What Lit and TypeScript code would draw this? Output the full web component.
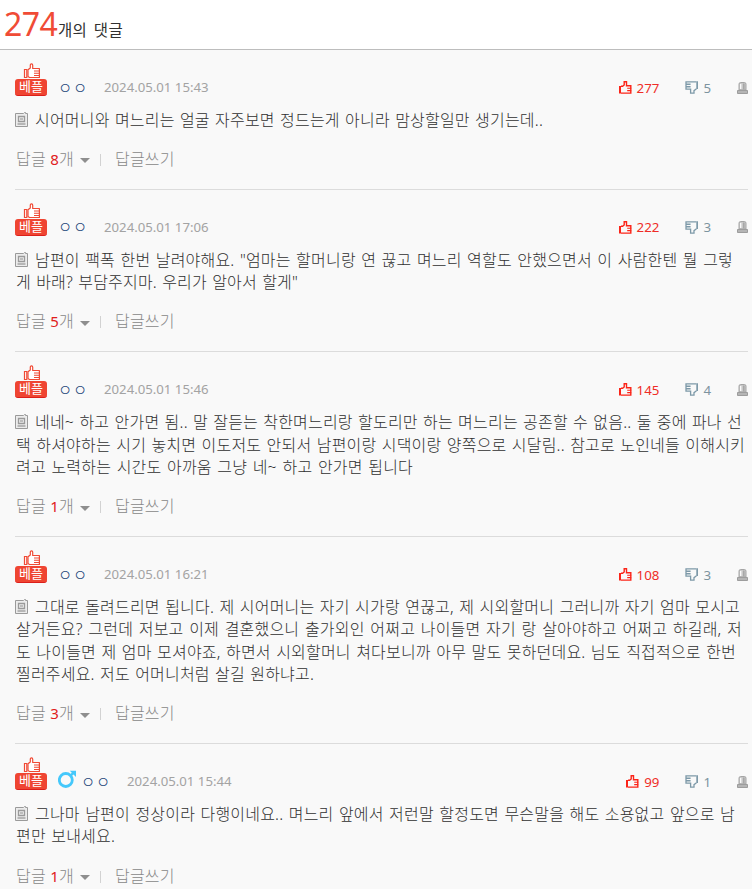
import { LitElement, html, css, svg, nothing } from "lit";
import { customElement, property } from "lit/decorators.js";
import { styleMap } from "lit/directives/style-map.js";

interface Line { text: string; width: number; }
interface Comment {
  date: string; up: number; down: number; replies: number; male?: boolean; lines: Line[];
}

const comments: Comment[] = [
  { date: "2024.05.01 15:43", up: 277, down: 5, replies: 8, lines: [
    { text: "시어머니와 며느리는 얼굴 자주보면 정드는게 아니라 맘상할일만 생기는데..", width: 508 },
  ] },
  { date: "2024.05.01 17:06", up: 222, down: 3, replies: 5, lines: [
    { text: "남편이 팩폭 한번 날려야해요. \"엄마는 할머니랑 연 끊고 며느리 역할도 안했으면서 이 사람한텐 뭘 그렇", width: 698 },
    { text: "게 바래? 부담주지마. 우리가 알아서 할게\"", width: 282 },
  ] },
  { date: "2024.05.01 15:46", up: 145, down: 4, replies: 1, lines: [
    { text: "네네~ 하고 안가면 됨.. 말 잘듣는 착한며느리랑 할도리만 하는 며느리는 공존할 수 없음.. 둘 중에 파나 선", width: 707 },
    { text: "택 하셔야하는 시기 놓치면 이도저도 안되서 남편이랑 시댁이랑 양쪽으로 시달림.. 참고로 노인네들 이해시키", width: 729 },
    { text: "려고 노력하는 시간도 아까움 그냥 네~ 하고 안가면 됩니다", width: 397 },
  ] },
  { date: "2024.05.01 16:21", up: 108, down: 3, replies: 3, lines: [
    { text: "그대로 돌려드리면 됩니다. 제 시어머니는 자기 시가랑 연끊고, 제 시외할머니 그러니까 자기 엄마 모시고", width: 705 },
    { text: "살거든요? 그런데 저보고 이제 결혼했으니 출가외인 어쩌고 나이들면 자기 랑 살아야하고 어쩌고 하길래, 저", width: 726 },
    { text: "도 나이들면 제 엄마 모셔야죠, 하면서 시외할머니 쳐다보니까 아무 말도 못하던데요. 님도 직접적으로 한번", width: 720 },
    { text: "찔러주세요. 저도 어머니처럼 살길 원하냐고.", width: 298 },
  ] },
  { date: "2024.05.01 15:44", up: 99, down: 1, replies: 1, male: true, lines: [
    { text: "그나마 남편이 정상이라 다행이네요.. 며느리 앞에서 저런말 할정도면 무슨말을 해도 소용없고 앞으로 남", width: 700 },
    { text: "편만 보내세요.", width: 99 },
  ] },
];

const bestThumb = svg`<svg width="18" height="16" viewBox="0 0 18 16" fill="#fff" stroke="#f04a35" stroke-width="1.2">
  <path d="M1.5 6.5h2.3v8H1.5z"/>
  <path d="M5 6.8 7.3 5V1.8Q7.5.7 8.5.8q1.2.1 1.2 1.5v3.2h6.7v9H6.5L5 13.6z" stroke-linejoin="round"/>
  <path d="M11 8h5M11 10.3h5M11 12.5h5" stroke-width="1.1"/></svg>`;

const upThumb = svg`<svg width="13" height="13" viewBox="0 0 13 13" fill="none" stroke="#fb2419" stroke-width="1.4">
  <path d="M0 5h2v7.5H0z" fill="#fb2419" stroke="none"/>
  <path d="M2 5.3h1.6L5.2 4V.8h2.3v4h4.3v7.3H2"/>
  <path d="M8.2 7.2h4M8.2 9.6h4" stroke-width="1.1"/></svg>`;

const downThumb = svg`<svg width="13" height="13" viewBox="0 0 13 13" fill="none" stroke="#7d99a8" stroke-width="1.3">
  <path d="M11.3.3H13v7.7h-1.7z" fill="#7d99a8" stroke="none"/>
  <path d="M11.3.8H1v7.4h4.6v4h3.4V9.6l2.5-1.8"/>
  <path d="M1 3.3h4.6M1 5.7h4.6" stroke-width="1.4"/></svg>`;

const siren = svg`<svg width="11" height="12" viewBox="0 0 11 12">
  <path d="M2 8V2.2Q2 .5 3.6.5h3.8Q9 .5 9 2.2V8z" fill="#c9c9c9" stroke="#a5a5a5"/>
  <path d="M3.7 2v5" stroke="#fff" stroke-width="1.2"/><path d="M6.8 1.5v6" stroke="#a5a5a5" stroke-width="1.5"/>
  <path d="M.5 8.5h10v3H.5z" fill="#b5b5b5" stroke="#9d9d9d"/></svg>`;

const note = svg`<svg width="13" height="15" viewBox="0 0 13 15" fill="none" stroke="#9a9a9a">
  <path d="M.5 1.5h8l1-1h1v1h2v13H.5z" fill="#ececec"/>
  <path d="M3.5 4.5h6v5h-6z" stroke-width="1.3"/><path d="M5 6.3h3v1.4H5z" fill="#aaa" stroke="none"/>
  <path d="M2.5 12h8" stroke-width="1.3"/></svg>`;

const maleSign = svg`<svg width="19" height="18" viewBox="0 0 19 18" fill="none" stroke="#45c8fb">
  <circle cx="7.8" cy="10" r="6.5" stroke-width="2.8"/>
  <path d="M12 6 16 2.3" stroke-width="2.4"/><path d="M11.8.8H18v6.2z" fill="#45c8fb" stroke="none"/></svg>`;

@customElement("comment-item")
class CommentItem extends LitElement {
  @property({ attribute: false }) data!: Comment;

  static styles = css`
    :host { display: block; border-bottom: 1px solid #dcdcdc; padding-top: 12px; box-sizing: border-box; }
    svg { display: block; flex: none; }
    .head { display: flex; height: 34px; align-items: flex-end; }
    .best { width: 32px; height: 33px; display: flex; flex-direction: column; align-items: center; }
    .best svg { margin-left: 2px; }
    .tag { width: 32px; height: 17px; box-sizing: border-box; border-radius: 3px; background: #ef4532; border-bottom: 1px solid #dc1f1b;
      color: #fff; font-size: 13px; line-height: 15px; text-align: center; font-weight: 400; }
    .who { display: flex; align-items: center; height: 17px; width: 57px; padding-left: 13px; box-sizing: border-box; gap: 7px; }
    .who.male { width: 80px; padding-left: 11px; }
    .who.male svg { margin: -5px -1px 0 0; }
    .o { width: 8px; height: 8px; font-size: 15.5px; line-height: 9px; color: #24487a; display: flex; justify-content: center; font-weight: 300; }
    .o:first-of-type { margin-left: 1px; }
    .date { width: 104.5px; height: 17px; line-height: 17px; color: #a3a3a3; font-size: 13.2px; text-align-last: justify; white-space: nowrap; }
    .votes { margin-left: auto; display: flex; align-items: center; height: 17px; font-size: 13.3px; line-height: 18px; }
    .up { display: flex; align-items: center; gap: 5px; color: #ef2d27; margin-right: 26px; }
    .down { display: flex; align-items: center; gap: 5px; color: #7d949f; margin-right: 26px; }
    .body { margin-top: 12.8px; color: #303030; font-size: 16px; line-height: 22.4px; letter-spacing: 0.2px; font-weight: 300; }
    .line { display: flex; height: 22.4px; padding-left: 1px; white-space: nowrap; }
    .line.first { padding-left: 0; gap: 7px; }
    .line svg { margin-top: 3px; }
    .text { text-align-last: justify; }
    .foot { display: flex; align-items: center; height: 20px; margin-top: 17.8px; padding: 0 0 20px 1px; color: #888;
      font-size: 16px; line-height: 20px; letter-spacing: 0.2px; font-weight: 300; white-space: nowrap; }
    .count { width: 58px; text-align-last: justify; }
    .num { color: #e0201c; font-weight: 400; font-size: 15px; }
    .arrow { width: 0; height: 0; border: 5px solid transparent; border-top-color: #8e8e8e; border-bottom: 0; margin: 4px 10px 0 6px; }
    .bar { width: 1px; height: 12px; background: #d2d2d2; margin: 2px 14px 0 0; }
    .write { width: 60px; }
  `;

  render() {
    const c = this.data;
    return html`
      <div class="head">
        <div class="best">${bestThumb}<div class="tag">베플</div></div>
        <div class="who ${c.male ? "male" : ""}">${c.male ? maleSign : nothing}<span class="o">ㅇ</span><span class="o">ㅇ</span></div>
        <div class="date">${c.date}</div>
        <div class="votes">
          <span class="up">${upThumb}${c.up}</span><span class="down">${downThumb}${c.down}</span>${siren}
        </div>
      </div>
      <div class="body">
        ${c.lines.map((l, i) => html`<div class="line ${i === 0 ? "first" : ""}">${i === 0 ? note : nothing}<div
          class="text" style=${styleMap({ width: `${l.width}px` })}>${l.text}</div></div>`)}
      </div>
      <div class="foot"><span class="count">답글 <span class="num">${c.replies}</span>개</span><span class="arrow"></span><span
        class="bar"></span><span class="write">답글쓰기</span></div>`;
  }
}

@customElement("app-root")
class AppRoot extends LitElement {
  static styles = css`
    :host { display: block; height: 889px; overflow: hidden; background: #f9f9f9; font-family: "Noto Sans", "Noto Sans CJK KR", sans-serif; }
    .title { display: flex; align-items: baseline; height: 50px; box-sizing: border-box; border-bottom: 1px solid #bdbdbd; background: #fff;
      padding-left: 4px; line-height: 47px; color: #303030; font-size: 15.5px; }
    .total { font-size: 32px; width: 54px; letter-spacing: -0.6px; color: #f04b36; }
    .label { width: 65px; letter-spacing: 0.3px; text-align-last: justify; white-space: nowrap; }
    .list { padding: 0 4px 0 15px; }
  `;
  render() {
    return html`
      <div class="title"><span class="total">274</span><span class="label">개의 댓글</span></div>
      <div class="list">${comments.map((c) => html`<comment-item .data=${c}></comment-item>`)}</div>`;
  }
}
